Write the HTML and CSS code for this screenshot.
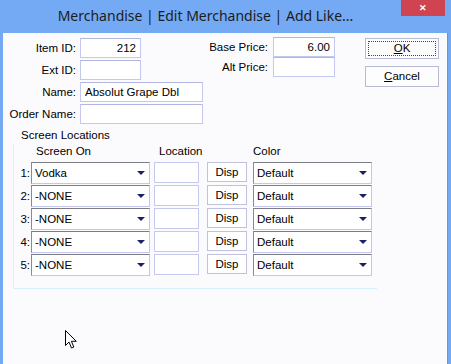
FILE: index.html
```html
<!DOCTYPE html>
<html>
<head>
  <meta charset="UTF-8">
  <title>Merchandise</title>
  <link rel="stylesheet" href="styles.css">
</head>
<body>
  <div class="window">
    <div class="titlebar">
      <span class="title">Merchandise | Edit Merchandise | Add Like...</span>
      <a href="javascript:;" class="close">&#10005;</a>
    </div>
    <div class="client">
      <div class="top">
        <div class="fields">
          <label>Item ID:</label>
          <div class="input short num">212</div>
          <label>Ext ID:</label>
          <div class="input short"></div>
          <label>Name:</label>
          <div class="input">Absolut Grape Dbl</div>
          <label>Order Name:</label>
          <div class="input"></div>
        </div>
        <div class="prices">
          <label>Base Price:</label>
          <div class="input num">6.00</div>
          <label>Alt Price:</label>
          <div class="input"></div>
        </div>
        <div class="actions">
          <a href="javascript:;" class="btn focus"><u>O</u>K</a>
          <a href="javascript:;" class="btn"><u>C</u>ancel</a>
        </div>
      </div>

      <div class="caption">Screen Locations</div>
      <div class="group">
        <div class="heads">
          <span class="h-screen">Screen On</span>
          <span class="h-loc">Location</span>
          <span class="h-color">Color</span>
        </div>
        <div class="row">
          <span class="num-label">1:</span>
          <div class="select"><span>Vodka</span><i class="arrow"></i></div>
          <div class="loc"></div>
          <a href="javascript:;" class="disp">Disp</a>
          <div class="select color"><span>Default</span><i class="arrow"></i></div>
        </div>
        <div class="row">
          <span class="num-label">2:</span>
          <div class="select"><span>-NONE</span><i class="arrow"></i></div>
          <div class="loc"></div>
          <a href="javascript:;" class="disp">Disp</a>
          <div class="select color"><span>Default</span><i class="arrow"></i></div>
        </div>
        <div class="row">
          <span class="num-label">3:</span>
          <div class="select"><span>-NONE</span><i class="arrow"></i></div>
          <div class="loc"></div>
          <a href="javascript:;" class="disp">Disp</a>
          <div class="select color"><span>Default</span><i class="arrow"></i></div>
        </div>
        <div class="row">
          <span class="num-label">4:</span>
          <div class="select"><span>-NONE</span><i class="arrow"></i></div>
          <div class="loc"></div>
          <a href="javascript:;" class="disp">Disp</a>
          <div class="select color"><span>Default</span><i class="arrow"></i></div>
        </div>
        <div class="row">
          <span class="num-label">5:</span>
          <div class="select"><span>-NONE</span><i class="arrow"></i></div>
          <div class="loc"></div>
          <a href="javascript:;" class="disp">Disp</a>
          <div class="select color"><span>Default</span><i class="arrow"></i></div>
        </div>
      </div>

      <svg class="cursor" width="13" height="20" viewBox="0 0 13 20">
        <path d="M0.5 0.5 L0.5 15.5 L4 12 L6.5 18 L8.8 17 L6.4 11.3 L11.3 11.3 Z" fill="#fff" stroke="#000" stroke-width="1"/>
      </svg>
    </div>
  </div>
</body>
</html>
```

FILE: styles.css
```css
* {
  margin: 0;
  padding: 0;
  box-sizing: border-box;
}
a {
  text-decoration: none;
  color: #000;
}
body {
  background: #74aaf3;
  font-family: "Liberation Sans", Arial, sans-serif;
  font-size: 11.5px;
  color: #000;
}
label {
  white-space: nowrap;
}
.window {
  width: 451px;
  height: 364px;
  display: flex;
  flex-direction: column;
}
.titlebar {
  position: relative;
  height: 33px;
  display: flex;
  justify-content: center;
  padding: 6px 40px 0 0;
}
.title {
  font-family: "Noto Sans", "Open Sans", sans-serif;
  font-size: 14px;
  line-height: 20px;
  color: #1c1c1c;
}
.close {
  position: absolute;
  top: 0;
  right: 6px;
  width: 44px;
  height: 16px;
  background: #cf4450;
  color: #fff;
  font-size: 9px;
  font-weight: bold;
  line-height: 16px;
  text-align: center;
}
.client {
  position: relative;
  flex: 1;
  margin: 0 3px;
  background: #fbfbfe;
  border-right: 1px solid #5d96ec;
}

/* top fields */
.top {
  display: flex;
  align-items: flex-start;
  padding-top: 4px;
}
.fields {
  display: grid;
  grid-template-columns: 73px 123px;
  grid-auto-rows: 20px;
  column-gap: 4px;
  row-gap: 2px;
  margin-top: 1px;
}
.fields label,
.prices label {
  justify-self: end;
  align-self: center;
}
.input {
  height: 20px;
  border: 1px solid #c4c7ee;
  border-top-color: #b3b6e2;
  background: #fff;
  padding: 0 4px;
  line-height: 18px;
  white-space: nowrap;
}
.input.short {
  width: 61px;
}
.input.num {
  text-align: right;
}
.prices {
  display: grid;
  grid-template-columns: 56px 62px;
  grid-auto-rows: 20px;
  column-gap: 5px;
  margin-left: 9px;
}
.actions {
  display: flex;
  flex-direction: column;
  gap: 7px;
  margin: 1px 0 0 30px;
}
.btn {
  display: block;
  width: 74px;
  height: 21px;
  line-height: 19px;
  text-align: center;
  border: 1px solid #b8bbd8;
  background: #fdfdfd;
}
.btn.focus {
  outline: 1px dotted #444;
  outline-offset: -4px;
}

/* screen locations */
.caption {
  margin: 4px 0 0 18px;
  line-height: 14px;
}
.group {
  width: 364px;
  margin: 2px 0 0 10px;
  padding: 0 5px 11px 0;
  border-left: 1px solid #dcf1fb;
  border-bottom: 1px solid #d6f0fc;
}
.heads {
  display: flex;
  line-height: 14px;
  margin-bottom: 4px;
}
.h-screen {
  margin-left: 22px;
  width: 123px;
}
.h-loc {
  width: 94px;
}
.row {
  display: flex;
  align-items: flex-start;
  margin-bottom: 1px;
}
.num-label {
  width: 17px;
  height: 22px;
  line-height: 22px;
  text-align: right;
  padding-right: 1px;
}
.select {
  width: 119px;
  height: 22px;
  display: flex;
  align-items: center;
  justify-content: space-between;
  padding: 0 4px 0 3px;
  background: #fff;
  border: 1px solid #c3c6ee;
  border-top-color: #7c7c84;
  border-left-color: #8a8a92;
}
.arrow {
  width: 0;
  height: 0;
  border-left: 4px solid transparent;
  border-right: 4px solid transparent;
  border-top: 4px solid #1a1f66;
}
.loc {
  width: 45px;
  height: 21px;
  margin-left: 4px;
  background: #fff;
  border: 1px solid #c6c9ef;
}
.disp {
  width: 40px;
  height: 20px;
  margin-left: 8px;
  line-height: 18px;
  text-align: center;
  background: #fff;
  border: 1px solid #bfc1de;
}
.select.color {
  margin-left: 6px;
}
.cursor {
  position: absolute;
  left: 62px;
  top: 297px;
}
```
